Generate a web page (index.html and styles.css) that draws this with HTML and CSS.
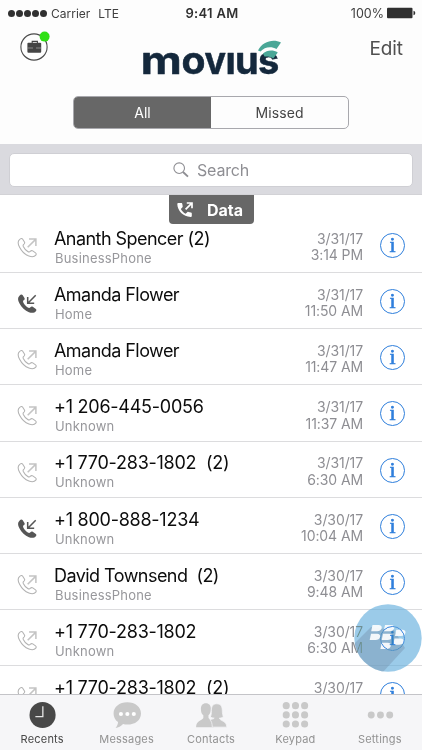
FILE: index.html
```html
<!DOCTYPE html>
<html lang="en">
<head>
    <meta charset="UTF-8">
    <meta name="viewport" content="width=device-width, initial-scale=1.0">
    <title>Movius - Recents</title>
    <link rel="stylesheet" href="styles.css">
</head>
<body>

<!-- Shared icons -->
<svg class="icon-defs" width="0" height="0">
    <symbol id="icon-outgoing" viewBox="0 0 22 22">
        <path d="M2.6 2.8 C.8 4.4 .9 7.4 2.7 10.8 C5 15.2 8.4 18.5 12.5 20 C15.6 21.1 18.3 20.8 19.7 19 C20.4 18.1 20.2 17.2 19.4 16.6 L16.5 14.6 C15.6 14 14.8 14.2 14.1 14.9 C13.2 15.9 12.4 15.9 11.3 15.2 C9.4 14 7.6 12 6.6 9.9 C6.1 8.7 6.3 8.1 7.3 7.4 C8.1 6.8 8.3 6.1 7.8 5.2 L6 2.4 C5.2 1.2 3.9 1.4 2.6 2.8Z" fill="none" stroke="#b2b2b2" stroke-width="1.1"/>
        <path d="M11.2 10.8 L19 3 M12.6 2.2 H19.8 V9.4" fill="none" stroke="#c4c4c4" stroke-width="1.6"/>
    </symbol>
    <symbol id="icon-incoming" viewBox="0 0 22 22">
        <path d="M2.6 2.8 C.5 4.4 .7 7.4 2.5 10.8 C4.8 15.2 8.4 18.8 12.5 20.2 C15.8 21.3 18.7 20.8 20 18.8 C20.6 18 20.3 17.1 19.4 16.5 L16.5 14.5 C15.6 13.9 14.8 14.1 14.1 14.9 C13.2 15.9 12.4 15.9 11.3 15.2 C9.4 14 7.6 12 6.6 9.9 C6.1 8.7 6.3 8.1 7.3 7.4 C8.1 6.8 8.3 6.1 7.8 5.2 L6 2.4 C5.2 1.2 3.9 1.4 2.6 2.8Z" fill="#565656"/>
        <path d="M19.6 2.4 L11.6 10.4 M11.2 4.2 V10.8 H18" fill="none" stroke="#565656" stroke-width="1.6"/>
    </symbol>
</svg>

<div class="phone">
    <div class="status-bar">
        <div class="carrier">
            <span class="signal"><i></i><i></i><i></i><i></i><i></i></span>
            <span class="carrier-name">Carrier</span>
            <span class="network">LTE</span>
        </div>
        <div class="clock">9:41 AM</div>
        <div class="power">
            <span>100%</span>
            <svg width="29" height="12" viewBox="0 0 29 12">
                <rect x="0" y=".8" width="25.5" height="10.4" rx="1" fill="#303030"/>
                <path d="M26.5 3.8 Q28.3 4.2 28.3 6 Q28.3 7.8 26.5 8.2Z" fill="#303030"/>
            </svg>
        </div>
    </div>

    <header class="header">
        <svg class="profile" width="32" height="32" viewBox="0 0 32 32">
            <circle cx="14" cy="17" r="13.1" fill="none" stroke="#4a4a4a" stroke-width="1.1"/>
            <path d="M12.2 13 V11.4 H17.4 V13" fill="none" stroke="#444" stroke-width="1.1"/>
            <rect x="7.4" y="12.8" width="13.8" height="10" rx="1" fill="#444"/>
            <path d="M7.4 18 H13 M16 18 H21.2" stroke="#aaa" stroke-width=".7"/>
            <circle cx="24.6" cy="6.6" r="5" fill="#2fe014"/>
        </svg>
        <svg class="logo" width="144" height="56" viewBox="0 0 144 56" role="img" aria-label="movius">
            <text class="logo-text" y="46"><tspan x="0.8" textLength="41" lengthAdjust="spacingAndGlyphs">m</tspan><tspan x="41.5" textLength="24" lengthAdjust="spacingAndGlyphs">o</tspan><tspan x="64.5" textLength="21.5" lengthAdjust="spacingAndGlyphs">v</tspan><tspan x="85.6">ı</tspan><tspan x="95">u</tspan><tspan x="118">s</tspan></text>
            <path d="M118 22.5 C122.5 13.5 133 10.5 141 14.5 L136.5 21 C131 18 124.5 19 120.5 23.5Z" fill="#4aa797"/>
            <path d="M123 25.5 C127 22 133 21.5 137.8 24.5 L133.3 30.5 C130.5 28.3 127 28.2 124.5 28.5Z" fill="#4aa797"/>
        </svg>
        <div class="edit">Edit</div>
    </header>

    <div class="tabs">
        <div class="tab active">All</div>
        <div class="tab">Missed</div>
    </div>

    <div class="search-bar">
        <div class="search-box">
            <svg width="16" height="16" viewBox="0 0 16 16" fill="none" stroke="#8e8e93">
                <circle cx="6.2" cy="6.2" r="5.3" stroke-width="1.1"/>
                <path d="M10 10 L15 14.6" stroke-width="1.9"/>
            </svg>
            <span>Search</span>
        </div>
    </div>

    <main class="calls">
        <div class="data-tag">
            <svg width="17" height="17" viewBox="0 0 17 17">
                <path d="M1.2 2 H4.3 C5 2 5.2 2.4 5.3 3.1 L5.7 5.3 C5.8 5.9 5.6 6.2 5.2 6.6 L3.8 8 C5 10.2 6.6 11.7 8.7 12.8 L10.2 11.3 C10.6 10.9 10.9 10.8 11.5 10.9 L13.9 11.4 C14.5 11.5 14.8 11.8 14.8 12.4 V15 C14.8 15.6 14.4 15.9 13.8 15.9 C6.3 16 .4 9.8 .3 3 C.3 2.4 .6 2 1.2 2Z" fill="#fff"/>
                <path d="M8.6 8.4 L14.6 2.4 M9.8 2 H15 V7.2" fill="none" stroke="#fff" stroke-width="1.7"/>
            </svg>
            <span>Data</span>
        </div>

        <div class="call">
            <svg class="call-icon"><use href="#icon-outgoing"/></svg>
            <div class="who"><div class="name">Ananth Spencer (2)</div><div class="label">BusinessPhone</div></div>
            <div class="when">3/31/17<br>3:14 PM</div>
            <div class="info">i</div>
        </div>
        <div class="call">
            <svg class="call-icon"><use href="#icon-incoming"/></svg>
            <div class="who"><div class="name">Amanda Flower</div><div class="label">Home</div></div>
            <div class="when">3/31/17<br>11:50 AM</div>
            <div class="info">i</div>
        </div>
        <div class="call">
            <svg class="call-icon"><use href="#icon-outgoing"/></svg>
            <div class="who"><div class="name">Amanda Flower</div><div class="label">Home</div></div>
            <div class="when">3/31/17<br>11:47 AM</div>
            <div class="info">i</div>
        </div>
        <div class="call">
            <svg class="call-icon"><use href="#icon-outgoing"/></svg>
            <div class="who"><div class="name number">+1 206-445-0056</div><div class="label">Unknown</div></div>
            <div class="when">3/31/17<br>11:37 AM</div>
            <div class="info">i</div>
        </div>
        <div class="call">
            <svg class="call-icon"><use href="#icon-outgoing"/></svg>
            <div class="who"><div class="name number">+1 770-283-1802  (2)</div><div class="label">Unknown</div></div>
            <div class="when">3/31/17<br>6:30 AM</div>
            <div class="info">i</div>
        </div>
        <div class="call">
            <svg class="call-icon"><use href="#icon-incoming"/></svg>
            <div class="who"><div class="name number">+1 800-888-1234</div><div class="label">Unknown</div></div>
            <div class="when">3/30/17<br>10:04 AM</div>
            <div class="info">i</div>
        </div>
        <div class="call">
            <svg class="call-icon"><use href="#icon-outgoing"/></svg>
            <div class="who"><div class="name">David Townsend  (2)</div><div class="label">BusinessPhone</div></div>
            <div class="when">3/30/17<br>9:48 AM</div>
            <div class="info">i</div>
        </div>
        <div class="call">
            <svg class="call-icon"><use href="#icon-outgoing"/></svg>
            <div class="who"><div class="name number">+1 770-283-1802</div><div class="label">Unknown</div></div>
            <div class="when">3/30/17<br>6:30 AM</div>
            <div class="info">i</div>
        </div>
        <div class="call">
            <svg class="call-icon"><use href="#icon-outgoing"/></svg>
            <div class="who"><div class="name number">+1 770-283-1802  (2)</div></div>
            <div class="when">3/30/17</div>
            <div class="info">i</div>
        </div>
    </main>

    <!-- Floating launcher button -->
    <svg class="launcher" width="68" height="68" viewBox="0 0 68 68">
        <defs>
            <clipPath id="launcher-clip"><circle cx="34" cy="34" r="33.7"/></clipPath>
        </defs>
        <g clip-path="url(#launcher-clip)">
            <rect width="68" height="68" fill="#5eabdb" fill-opacity=".62"/>
            <path d="M17 23 L-3 43 V68 H29 L51 44 L40 26Z" fill="#6f87a0" fill-opacity=".36"/>
        </g>
        <g fill="#fff" fill-opacity=".9">
            <path d="M18.5 21 H24.5 Q28.3 21.4 27.6 24.3 Q26.8 27.2 23 27.2 H17.2Z"/>
            <path d="M31 21 H37 Q40.8 21.4 40.1 24.3 Q39.3 27.2 35.5 27.2 H29.7Z"/>
            <path d="M17 29.8 H23 Q26.8 30.2 26.1 33.1 Q25.3 36 21.5 36 H15.7Z"/>
            <path d="M29 29.8 H35 Q38.8 30.2 38.1 33.1 Q37.3 36 33.5 36 H27.7Z"/>
            <path d="M42.3 25.7 H48.3 Q52.1 26.1 51.4 29 Q50.6 31.9 46.8 31.9 H41Z"/>
            <path d="M40.5 34.5 H46.5 Q50.3 34.9 49.6 37.8 Q48.8 40.7 45 40.7 H39.2Z"/>
            <path d="M27.7 38.8 H33.7 Q37.5 39.2 36.8 42.1 Q36 45 32.2 45 H26.4Z"/>
        </g>
    </svg>

    <nav class="nav">
        <div class="nav-item selected">
            <svg width="34" height="30" viewBox="0 0 34 30">
                <circle cx="17.6" cy="15" r="14" fill="#484848"/>
                <path d="M17.9 5.5 V16.7 H9.9" fill="none" stroke="#e4e4e4" stroke-width="1.4"/>
            </svg>
            <span>Recents</span>
        </div>
        <div class="nav-item">
            <svg width="34" height="30" viewBox="0 0 34 30">
                <path d="M17.3 1.4 C25.8 1.4 32 6.6 32 13.3 C32 20.3 25.8 25.3 17.3 25.3 C15.8 25.3 14.2 25.1 12.8 24.7 C10.5 27.2 7.8 28.7 4.8 29 C6.5 27 7.3 24.9 7.4 22.6 C4.3 20.4 2.6 17 2.6 13.3 C2.6 6.6 8.8 1.4 17.3 1.4Z" fill="#c9c9c9"/>
                <g fill="#fff"><circle cx="10.5" cy="14" r="2.2"/><circle cx="17.4" cy="14" r="2.2"/><circle cx="24.3" cy="14" r="2.2"/></g>
            </svg>
            <span>Messages</span>
        </div>
        <div class="nav-item">
            <svg width="34" height="30" viewBox="0 0 34 30">
                <path d="M11.5 2.5 C15 2.5 17 5 16.8 8.8 C16.7 12 15.8 14 14.3 15.4 V18 C15 20 20.3 20.3 20.3 28 H1 C1 20.8 7.8 21 8.8 18.2 V15.4 C7 14 6.3 12 6.2 8.8 C6 5 8 2.5 11.5 2.5Z" fill="#c9c9c9"/>
                <path d="M23.2 3 C27.5 3 29 6 29.1 10 C29.1 13.5 29.8 15.5 30.2 17.2 C28.5 18.2 27 18.4 26 18.3 C26.8 21.8 33.5 20.8 34 28 H18.4 C18.2 23.8 17.5 21.5 15.8 20 C18.5 19.5 20 19 20.4 18.3 C19.2 18.3 17.5 18 16.2 17.2 C17.3 15.5 17.5 13 17.4 10 C17.4 6 19 3 23.2 3Z" fill="#c9c9c9" stroke="#f6f6f8" stroke-width=".8"/>
            </svg>
            <span>Contacts</span>
        </div>
        <div class="nav-item">
            <svg width="34" height="30" viewBox="0 0 34 30" fill="#c9c9c9">
                <circle cx="7.6" cy="5" r="3.8"/><circle cx="17.5" cy="5" r="3.8"/><circle cx="27.3" cy="5" r="3.8"/>
                <circle cx="7.6" cy="14.9" r="3.8"/><circle cx="17.5" cy="14.9" r="3.8"/><circle cx="27.3" cy="14.9" r="3.8"/>
                <circle cx="7.6" cy="24.7" r="3.8"/><circle cx="17.5" cy="24.7" r="3.8"/><circle cx="27.3" cy="24.7" r="3.8"/>
            </svg>
            <span>Keypad</span>
        </div>
        <div class="nav-item">
            <svg width="34" height="30" viewBox="0 0 34 30" fill="#c9c9c9">
                <circle cx="7.6" cy="15" r="3.7"/><circle cx="17.5" cy="15" r="3.7"/><circle cx="27.4" cy="15" r="3.7"/>
            </svg>
            <span>Settings</span>
        </div>
    </nav>
</div>

</body>
</html>
```
FILE: styles.css
```css
* {
    box-sizing: border-box;
}

body {
    margin: 0;
    font-family: Inter, "Liberation Sans", sans-serif;
    background-color: #fff;
}

.icon-defs {
    position: absolute;
}

.phone {
    position: relative;
    display: flex;
    flex-direction: column;
    width: 422px;
    height: 750px;
    overflow: hidden;
    background-color: #fdfdfd;
}

/* Status bar */
.status-bar {
    display: grid;
    grid-template-columns: 1fr auto 1fr;
    align-items: center;
    height: 26px;
    padding: 0 6px 0 8px;
    font-size: 12px;
    color: #404040;
}

.carrier {
    display: flex;
    align-items: center;
}

.signal {
    display: flex;
    gap: 1px;
}

.signal i {
    width: 7px;
    height: 7px;
    border-radius: 50%;
    background-color: #303030;
}

.carrier-name {
    margin-left: 4px;
}

.network {
    margin-left: 8px;
}

.clock {
    font-size: 13px;
    font-weight: 600;
    letter-spacing: 0.3px;
    color: #303030;
}

.power {
    display: flex;
    align-items: center;
    justify-content: flex-end;
    gap: 3px;
    font-size: 12.5px;
}

/* Header */
.header {
    display: grid;
    grid-template-columns: 1fr auto 1fr;
    flex: none;
    height: 70px;
    padding: 0 19px 0 20px;
}

.profile {
    margin-top: 4px;
}

.logo {
    margin-top: 2px;
}

.logo-text {
    font-size: 38px;
    font-weight: 700;
    fill: #14283c;
    stroke: #14283c;
    stroke-width: 0.5;
    stroke-linejoin: round;
}

.edit {
    justify-self: end;
    margin-top: 10px;
    font-size: 19px;
    line-height: 25px;
    letter-spacing: -0.1px;
    color: #505050;
}

/* All / Missed switch */
.tabs {
    display: flex;
    flex: none;
    width: 276px;
    height: 33px;
    margin: 0 auto 15px 73px;
    border: 1px solid #a8a8ad;
    border-radius: 5px;
    overflow: hidden;
}

.tab {
    flex: 1;
    font-size: 14px;
    line-height: 32px;
    text-align: center;
    letter-spacing: 0.1px;
    color: #444;
}

.tab.active {
    background-color: #676767;
    color: #fff;
}

/* Search */
.search-bar {
    flex: none;
    height: 51px;
    padding: 9px 9px 8px;
    background-color: #dadadf;
    border-bottom: 1px solid #d2d2d6;
}

.search-box {
    display: flex;
    align-items: center;
    justify-content: center;
    gap: 8px;
    height: 34px;
    border: 1px solid #cfcfd4;
    border-radius: 5px;
    background-color: #fff;
    font-size: 16px;
    letter-spacing: -0.2px;
    color: #8e8e93;
}

/* Call list */
.calls {
    position: relative;
    flex: 1;
    min-height: 0;
    padding-top: 22px;
    overflow: hidden;
    background-color: #fff;
}

.data-tag {
    position: absolute;
    top: 0;
    left: 169px;
    display: flex;
    align-items: center;
    gap: 13px;
    width: 85px;
    height: 29px;
    padding-left: 8px;
    border-radius: 0 0 4px 4px;
    background-color: #676767;
    font-size: 16px;
    font-weight: 700;
    color: #fff;
}

.call {
    display: flex;
    height: 56.15px;
    padding: 0 17px;
    border-bottom: 1px solid #dcdcde;
}

.call-icon {
    width: 21px;
    height: 21px;
    margin-top: 20px;
}

.who {
    flex: 1;
    margin-left: 16px;
    padding-top: 10.8px;
}

.name {
    font-size: 18px;
    line-height: 22px;
    letter-spacing: -0.55px;
    white-space: pre;
    color: #0c0c0c;
}

.name.number {
    letter-spacing: -0.25px;
}

.label {
    padding-left: 1px;
    font-size: 13px;
    line-height: 17px;
    letter-spacing: 0.2px;
    color: #97979b;
}

.when {
    padding-top: 13.8px;
    font-size: 14px;
    line-height: 16.3px;
    letter-spacing: -0.1px;
    text-align: right;
    color: #8e8e93;
}

.info {
    width: 25px;
    height: 25px;
    margin: 16px 0 0 17px;
    border: 1.3px solid #2f7fdc;
    border-radius: 50%;
    font-family: "Liberation Serif", serif;
    font-size: 22px;
    line-height: 22px;
    text-align: center;
    color: #2f7fdc;
    -webkit-text-stroke: 0.6px #2f7fdc;
}

/* Blended so the row's info button stays visible below it */
.launcher {
    position: absolute;
    left: 354px;
    top: 604px;
    mix-blend-mode: darken;
}

/* Bottom navigation */
.nav {
    display: flex;
    flex: none;
    height: 56px;
    border-top: 1px solid #c4c4c8;
    background-color: #f6f6f8;
}

.nav-item {
    display: flex;
    flex: 1;
    flex-direction: column;
    align-items: center;
    padding-top: 6px;
    font-size: 11px;
    line-height: 21px;
    letter-spacing: 0.2px;
    color: #929292;
}

.nav-item.selected {
    color: #484848;
}
```
